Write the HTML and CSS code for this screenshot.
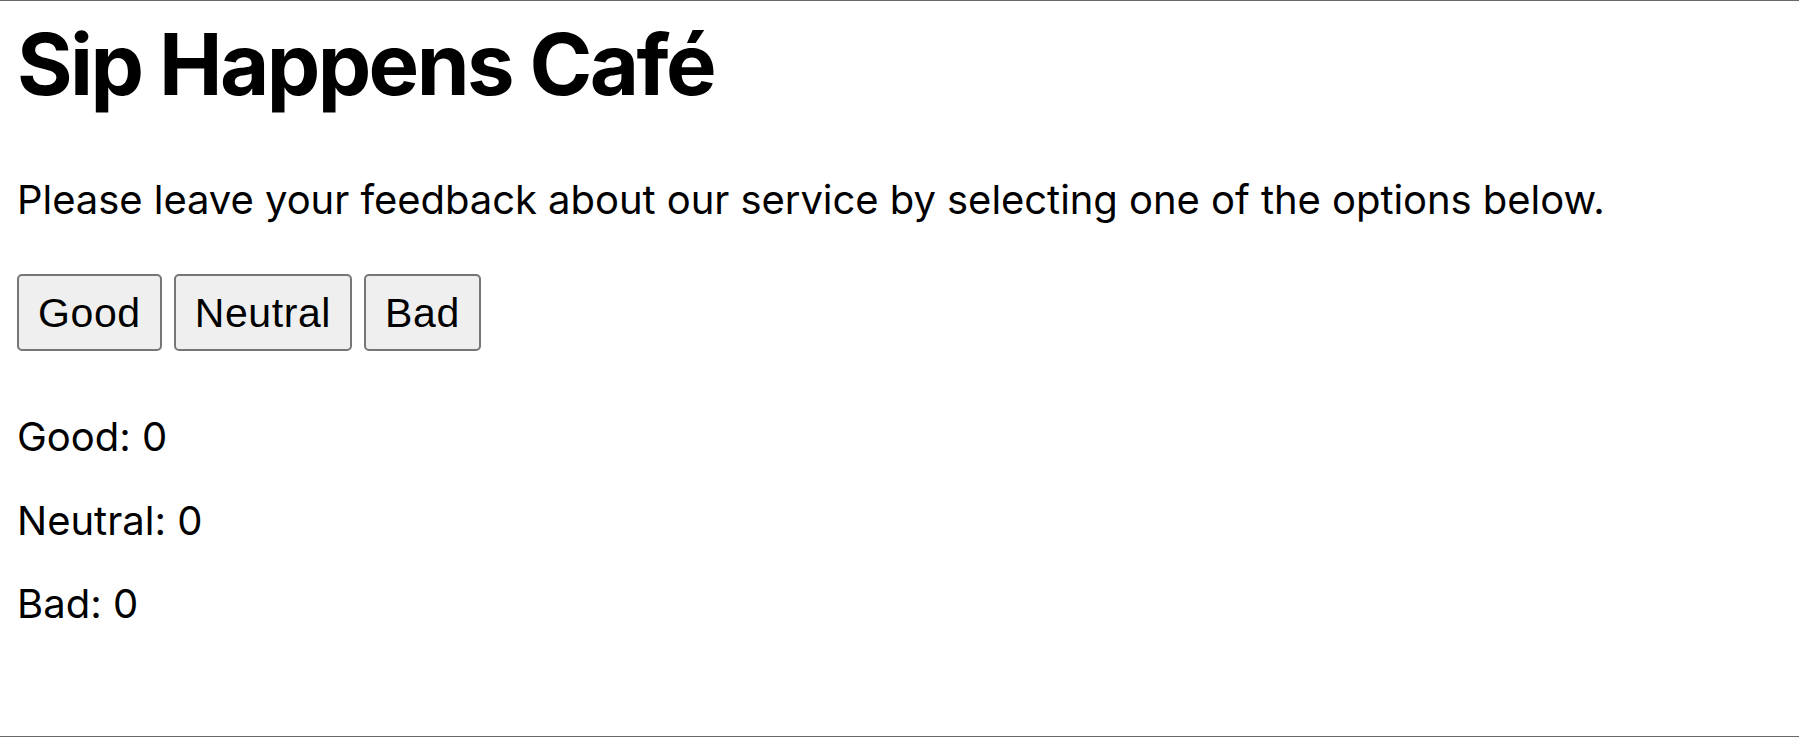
FILE: index.html
```html
<!DOCTYPE html>
<html lang="en">
<head>
<meta charset="utf-8">
<title>Sip Happens Café</title>
<link rel="stylesheet" href="styles.css">
</head>
<body>
<div class="page">
  <h1 class="title">Sip Happens Café</h1>
  <p class="intro">Please leave your feedback about our service by selecting one of the options below.</p>
  <div class="options">
    <button class="option" type="button">Good</button>
    <button class="option" type="button">Neutral</button>
    <button class="option" type="button">Bad</button>
  </div>
  <div class="stats">
    <p class="stat">Good: 0</p>
    <p class="stat">Neutral: 0</p>
    <p class="stat">Bad: 0</p>
  </div>
</div>
</body>
</html>
```

FILE: styles.css
```css
html, body {
  margin: 0;
  padding: 0;
  background: #ffffff;
}

.page {
  box-sizing: border-box;
  height: 737px;
  border-top: 1px solid #68676d;
  border-bottom: 1px solid #68676d;
  padding: 0 17px;
  display: flex;
  flex-direction: column;
  font-family: Inter, "Noto Sans", sans-serif;
  color: #000000;
}

.title {
  margin: 12px 0 0;
  font-size: 85px;
  line-height: 104px;
  font-weight: 700;
  letter-spacing: -2.6px;
}

.intro {
  margin: 59px 0 0;
  font-size: 40px;
  line-height: 48px;
  letter-spacing: -0.05px;
}

.options {
  margin-top: 50px;
  display: flex;
  gap: 12px;
}

.option {
  font-family: "Liberation Sans", Arial, sans-serif;
  font-size: 41px;
  line-height: 47px;
  letter-spacing: 0.6px;
  padding: 14px 19px 12px;
  border: 2px solid #767676;
  border-radius: 5px;
  background: #efefef;
  color: #000000;
}

.stats {
  margin-top: 62px;
  display: flex;
  flex-direction: column;
  gap: 35.5px;
}

.stat {
  margin: 0;
  font-size: 40px;
  line-height: 48px;
}
```
